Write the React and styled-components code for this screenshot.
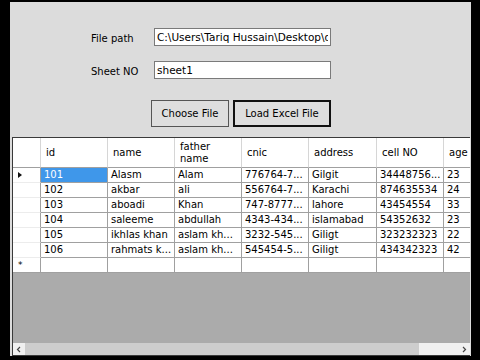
import React from 'react';
import styled, { createGlobalStyle } from 'styled-components';

const GlobalStyle = createGlobalStyle`
  html, body {
    margin: 0;
    padding: 0;
    background: #000;
  }
  * {
    box-sizing: border-box;
  }
`;

const FONT = `'DejaVu Sans', 'Liberation Sans', sans-serif`;

const columns = [
  { key: 'id', title: 'id', width: 67 },
  { key: 'name', title: 'name', width: 67 },
  { key: 'father', title: 'father\nname', width: 67 },
  { key: 'cnic', title: 'cnic', width: 67 },
  { key: 'address', title: 'address', width: 68 },
  { key: 'cell', title: 'cell NO', width: 67 },
  { key: 'age', title: 'age', width: 67 },
];

const rows = [
  { id: '101', name: 'Alasm', father: 'Alam', cnic: '776764-7...', address: 'Gilgit', cell: '34448756...', age: '23' },
  { id: '102', name: 'akbar', father: 'ali', cnic: '556764-7...', address: 'Karachi', cell: '874635534', age: '24' },
  { id: '103', name: 'aboadi', father: 'Khan', cnic: '747-8777...', address: 'lahore', cell: '43454554', age: '33' },
  { id: '104', name: 'saleeme', father: 'abdullah', cnic: '4343-434...', address: 'islamabad', cell: '54352632', age: '23' },
  { id: '105', name: 'ikhlas khan', father: 'aslam kh...', cnic: '3232-545...', address: 'Giligt', cell: '323232323', age: '22' },
  { id: '106', name: 'rahmats k...', father: 'aslam kh...', cnic: '545454-5...', address: 'Giligt', cell: '434342323', age: '42' },
];

const template = `28px ${columns.map((c) => `${c.width}px`).join(' ')}`;

const Screen = styled.div`
  width: 480px;
  height: 360px;
  padding: 2px 9px 4px 10px;
  background: #000;
  overflow: hidden;
`;

const Window = styled.div`
  display: flex;
  flex-direction: column;
  width: 461px;
  height: 354px;
  background: #dcdcdc;
  font-family: ${FONT};
  color: #000;
`;

const FormArea = styled.div`
  height: 135px;
  padding: 26px 0 0 81px;
`;

const Fields = styled.div`
  display: grid;
  grid-template-columns: 63px 177px;
  row-gap: 15px;
`;

const Label = styled.label`
  padding-top: 4px;
  font-size: 10px;
  line-height: 14px;
`;

const TextBox = styled.input`
  width: 177px;
  height: 18px;
  padding: 0 2px;
  border: 1px solid #7a7a7a;
  background: #fff;
  font-family: ${FONT};
  font-size: 10.5px;
  color: #000;
  outline: none;
`;

const ButtonRow = styled.div`
  display: flex;
  gap: 4px;
  margin: 21px 0 0 60px;
`;

const Button = styled.button`
  width: ${({ $w }) => $w}px;
  height: 27px;
  padding: 0;
  border: ${({ $primary }) => ($primary ? '2px solid #111' : '1px solid #555')};
  background: #dedede;
  font-family: ${FONT};
  font-size: 10px;
  color: #000;
`;

const GridView = styled.div`
  display: flex;
  flex-direction: column;
  width: 458px;
  height: 219px;
  margin-left: 2px;
  border-top: 1px solid #3a3a3a;
  border-left: 1px solid #3a3a3a;
  border-bottom: 1px solid #3a3a3a;
  background: #ababab;
  overflow: hidden;
`;

const Row = styled.div`
  display: grid;
  grid-template-columns: ${template};
  height: ${({ $h }) => $h}px;
  flex: none;
`;

const HeaderCell = styled.div`
  display: flex;
  align-items: center;
  padding-left: 5px;
  background: #fff;
  border-right: 1px solid #d6d6d6;
  border-bottom: 1px solid #a0a0a0;
  font-size: 10px;
  line-height: 12px;
  white-space: pre;
`;

const RowHeader = styled.div`
  display: flex;
  align-items: center;
  padding-left: 5px;
  background: #fff;
  border-right: 1px solid #a0a0a0;
  border-bottom: 1px solid ${({ $last }) => ($last ? '#a0a0a0' : '#ececec')};
  font-size: 9px;
`;

const Cell = styled.div`
  padding: 0 2px 0 3px;
  background: ${({ $selected }) => ($selected ? '#3f97ea' : '#fff')};
  color: ${({ $selected }) => ($selected ? '#fff' : '#000')};
  border-right: 1px solid #a0a0a0;
  border-bottom: 1px solid #a0a0a0;
  font-size: 10px;
  line-height: 14px;
  white-space: nowrap;
  overflow: hidden;
`;

const Filler = styled.div`
  flex: 1;
`;

const ScrollBar = styled.div`
  display: flex;
  height: 12px;
  background: #f0f0f0;
  flex: none;
`;

const ScrollArrow = styled.div`
  display: flex;
  align-items: center;
  justify-content: center;
  width: 12px;
`;

const Thumb = styled.div`
  width: 394px;
  background: #cdcdcd;
`;

const Track = styled.div`
  flex: 1;
`;

const Chevron = ({ dir }) => (
  <svg width="6" height="7" viewBox="0 0 6 7">
    <path
      d={dir === 'left' ? 'M4 1 L1.5 3.5 L4 6' : 'M2 1 L4.5 3.5 L2 6'}
      fill="none"
      stroke="#444"
      strokeWidth="1.2"
    />
  </svg>
);

const CurrentRowMark = () => (
  <svg width="4" height="6" viewBox="0 0 4 6">
    <path d="M0 0 L4 3 L0 6 Z" fill="#111" />
  </svg>
);

export default function App() {
  return (
    <Screen>
      <GlobalStyle />
      <Window>
        <FormArea>
          <Fields>
            <Label>File path</Label>
            <TextBox readOnly value="C:\Users\Tariq Hussain\Desktop\data.xlsx" />
            <Label>Sheet NO</Label>
            <TextBox readOnly value="sheet1" />
          </Fields>
          <ButtonRow>
            <Button $w={78}>Choose File</Button>
            <Button $w={98} $primary>
              Load Excel File
            </Button>
          </ButtonRow>
        </FormArea>

        <GridView>
          <Row $h={30}>
            <HeaderCell />
            {columns.map((c) => (
              <HeaderCell key={c.key}>{c.title}</HeaderCell>
            ))}
          </Row>

          {rows.map((r, i) => (
            <Row key={r.id} $h={15}>
              <RowHeader>{i === 0 && <CurrentRowMark />}</RowHeader>
              {columns.map((c) => (
                <Cell key={c.key} $selected={i === 0 && c.key === 'id'}>
                  {r[c.key]}
                </Cell>
              ))}
            </Row>
          ))}

          <Row $h={15}>
            <RowHeader $last>*</RowHeader>
            {columns.map((c) => (
              <Cell key={c.key} />
            ))}
          </Row>

          <Filler />

          <ScrollBar>
            <ScrollArrow>
              <Chevron dir="left" />
            </ScrollArrow>
            <Thumb />
            <Track />
            <ScrollArrow>
              <Chevron dir="right" />
            </ScrollArrow>
          </ScrollBar>
        </GridView>
      </Window>
    </Screen>
  );
}
